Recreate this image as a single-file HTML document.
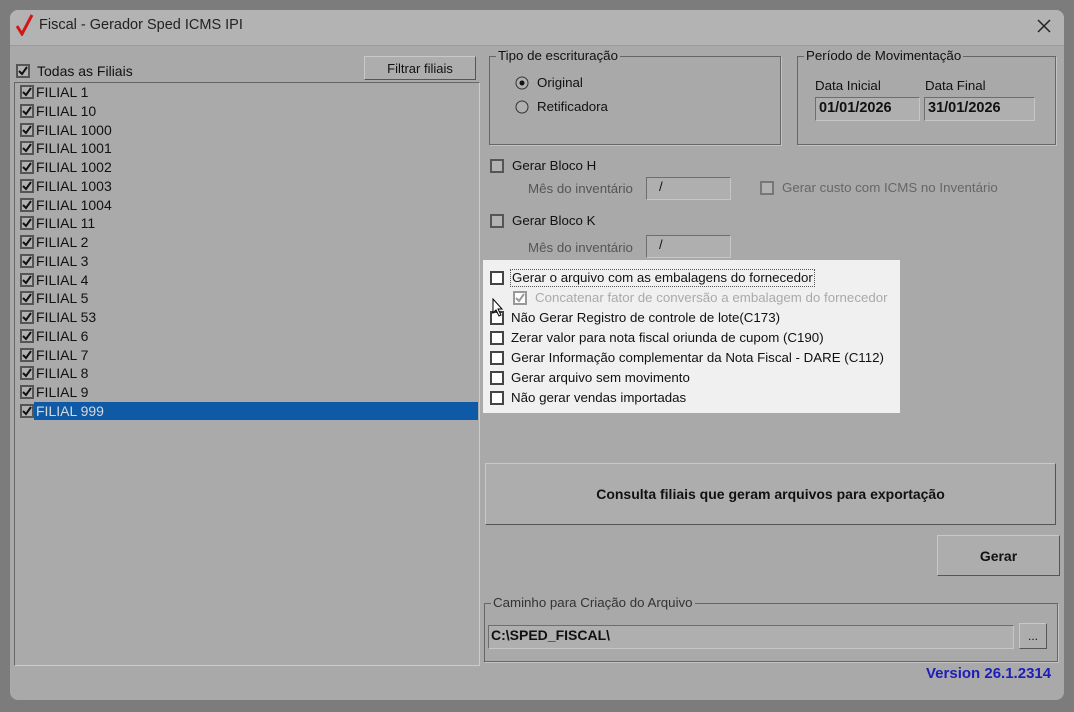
<!DOCTYPE html>
<html><head><meta charset="utf-8"><style>
*{box-sizing:border-box;margin:0;padding:0}
body{width:1074px;height:712px;background:#7c7c7c;font-family:"Liberation Sans",sans-serif;font-size:13.3px;color:#111;position:relative;overflow:hidden}
.a{position:absolute;white-space:nowrap}
.win{left:10px;top:10px;width:1054px;height:690px;background:#a9a9a9;border-radius:8px;overflow:hidden}
.title{left:10px;top:10px;width:1054px;height:36px;background:#b3b3b3;border-radius:8px 8px 0 0;border-bottom:1px solid #9a9a9a}
.cb{position:absolute;width:14px;height:14px;border:2px solid #555;background:#b2b2b2}
.cbw{background:#fff;border-color:#444}
.grp{position:absolute;border:1px solid #666;box-shadow:1px 1px 0 #c4c4c4}
.lg{position:absolute;top:-9px;left:6px;background:#a9a9a9;padding:0 2px;font-size:13.3px;white-space:nowrap}
.inp{position:absolute;background:#afafaf;border:1px solid #6e6e6e;border-right-color:#c6c6c6;border-bottom-color:#c6c6c6}
.btn{position:absolute;background:#adadad;border:1px solid #c8c8c8;border-right-color:#555;border-bottom-color:#555;display:flex;align-items:center;justify-content:center;font-weight:bold;white-space:nowrap}
.row{position:absolute;left:20px;width:450px;height:18px;line-height:18px;white-space:nowrap}
.row .cb{left:0;top:2px}
.row span{position:absolute;left:15px;padding:0 1px;white-space:nowrap;font-size:14px}
</style></head><body>
<div class="a win"></div>
<div class="a title"></div>
<svg class="a" style="left:15px;top:14px" width="20" height="22" viewBox="0 0 20 22"><path d="M2 12 L7 20 L17 1" fill="none" stroke="#d01818" stroke-width="3"/></svg>
<div class="a" style="left:39px;top:17px;font-size:14.5px;color:#222">Fiscal - Gerador Sped ICMS IPI</div>
<svg class="a" style="left:1037px;top:19px" width="14" height="14"><path d="M1 1L13 13M13 1L1 13" stroke="#222" stroke-width="1.5"/></svg>

<div class="cb" style="left:16px;top:64px"></div>
<svg class="a" style="left:16px;top:64px" width="14" height="14"><path d="M3 7L6 10L11 3" fill="none" stroke="#111" stroke-width="2"/></svg>
<div class="a" style="left:37px;top:63px;font-size:14px">Todas as Filiais</div>
<div class="btn" style="left:364px;top:56px;width:112px;height:24px;font-weight:normal;font-size:13px">Filtrar filiais</div>

<div class="a" style="left:14px;top:82px;width:466px;height:584px;border:1px solid #666;border-right-color:#ccc;border-bottom-color:#ccc;background:#aaaaaa"></div>
<div class="a" style="left:34px;top:402px;width:444px;height:18px;background:#0f5aa6"></div>
<div id="list"></div>

<div class="grp" style="left:489px;top:56px;width:292px;height:89px"><div class="lg">Tipo de escrituração</div></div>
<svg class="a" style="left:515px;top:76px" width="14" height="14"><circle cx="7" cy="7" r="6" fill="#b0b0b0" stroke="#333"/><circle cx="7" cy="7" r="2.5" fill="#111"/></svg>
<div class="a" style="left:537px;top:75px">Original</div>
<svg class="a" style="left:515px;top:100px" width="14" height="14"><circle cx="7" cy="7" r="6" fill="#b0b0b0" stroke="#333"/></svg>
<div class="a" style="left:537px;top:99px">Retificadora</div>

<div class="grp" style="left:797px;top:56px;width:259px;height:89px"><div class="lg">Período de Movimentação</div></div>
<div class="a" style="left:815px;top:78px">Data Inicial</div>
<div class="a" style="left:925px;top:78px">Data Final</div>
<div class="inp" style="left:815px;top:97px;width:105px;height:24px"></div>
<div class="a" style="left:819px;top:100px;font-weight:bold;font-size:14.5px">01/01/2026</div>
<div class="inp" style="left:924px;top:97px;width:111px;height:24px"></div>
<div class="a" style="left:928px;top:100px;font-weight:bold;font-size:14.5px">31/01/2026</div>

<div class="cb" style="left:490px;top:159px"></div>
<div class="a" style="left:512px;top:158px">Gerar Bloco H</div>
<div class="a" style="left:528px;top:181px;color:#555">Mês do inventário</div>
<div class="inp" style="left:646px;top:177px;width:85px;height:23px"></div>
<div class="a" style="left:659px;top:179px">/</div>
<div class="cb" style="left:760px;top:181px;border-color:#777"></div>
<div class="a" style="left:782px;top:180px;color:#666">Gerar custo com ICMS no Inventário</div>
<div class="cb" style="left:490px;top:214px"></div>
<div class="a" style="left:512px;top:213px">Gerar Bloco K</div>
<div class="a" style="left:528px;top:240px;color:#555">Mês do inventário</div>
<div class="inp" style="left:646px;top:235px;width:85px;height:23px"></div>
<div class="a" style="left:659px;top:237px">/</div>

<div class="a" style="left:483px;top:260px;width:417px;height:153px;background:#f0f0f0"></div>
<div class="cb cbw" style="left:490px;top:271px"></div>
<div class="a" style="left:510px;top:269px;border:1px dotted #555;padding:0 1px;height:18px">Gerar o arquivo com as embalagens do fornecedor</div>
<div class="cb cbw" style="left:513px;top:291px;border-color:#999"></div>
<svg class="a" style="left:513px;top:291px" width="14" height="14"><path d="M3 7L6 10L11 3" fill="none" stroke="#999" stroke-width="2"/></svg>
<div class="a" style="left:535px;top:290px;color:#aaa">Concatenar fator de conversão a embalagem do fornecedor</div>
<div class="cb cbw" style="left:490px;top:311px"></div><div class="a" style="left:511px;top:310px">Não Gerar Registro de controle de lote(C173)</div>
<div class="cb cbw" style="left:490px;top:331px"></div><div class="a" style="left:511px;top:330px">Zerar valor para nota fiscal oriunda de cupom (C190)</div>
<div class="cb cbw" style="left:490px;top:351px"></div><div class="a" style="left:511px;top:350px">Gerar Informação complementar da Nota Fiscal - DARE (C112)</div>
<div class="cb cbw" style="left:490px;top:371px"></div><div class="a" style="left:511px;top:370px">Gerar arquivo sem movimento</div>
<div class="cb cbw" style="left:490px;top:391px"></div><div class="a" style="left:511px;top:390px">Não gerar vendas importadas</div>
<svg class="a" style="left:492px;top:298px" width="12" height="20"><path d="M1 1L1 15L4 12L7 18L9 17L6 11L10 11Z" fill="#fff" stroke="#000"/></svg>

<div class="btn" style="left:485px;top:463px;width:571px;height:62px;font-size:14px">Consulta filiais que geram arquivos para exportação</div>
<div class="btn" style="left:937px;top:535px;width:123px;height:41px;font-size:14px">Gerar</div>

<div class="grp" style="left:484px;top:603px;width:574px;height:59px"><div class="lg" style="color:#333">Caminho para Criação do Arquivo</div></div>
<div class="inp" style="left:488px;top:625px;width:526px;height:24px"></div>
<div class="a" style="left:491px;top:627px;font-weight:bold;font-size:14px">C:\SPED_FISCAL\</div>
<div class="btn" style="left:1019px;top:623px;width:28px;height:26px;font-weight:normal;font-size:12px">...</div>
<div class="a" style="left:926px;top:665px;color:#1d1dbb;font-weight:bold;font-size:15px">Version 26.1.2314</div>

<script>
var n=["1","10","1000","1001","1002","1003","1004","11","2","3","4","5","53","6","7","8","9","999"],h="";
for(var i=0;i<n.length;i++){var t=83+i*18.76;h+='<div class="row" style="top:'+t+'px"><div class="cb"></div><svg class="a" style="left:0;top:2px" width="14" height="14"><path d="M3 7L6 10L11 3" fill="none" stroke="#111" stroke-width="2"/></svg><span'+(i==17?' style="color:#d8d8d8"':'')+'>FILIAL '+n[i]+'</span></div>';}
document.getElementById("list").innerHTML=h;
</script>
</body></html>
